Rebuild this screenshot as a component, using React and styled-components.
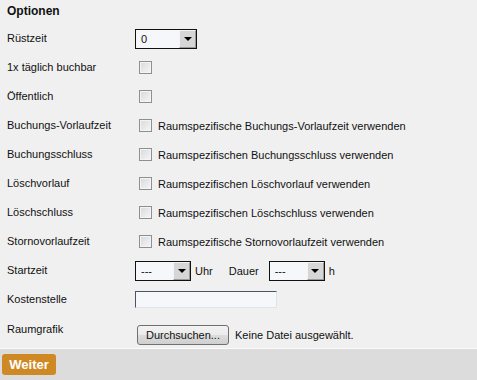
import React from "react";
import styled, { createGlobalStyle } from "styled-components";

const Global = createGlobalStyle`
  html, body { margin: 0; padding: 0; background: #f0f0f0; }
  body { font-family: "Liberation Sans", Arial, sans-serif; font-size: 11px; color: #111; }
`;

const Page = styled.div`
  width: 477px;
  height: 380px;
  display: flex;
  flex-direction: column;
  background: #f0f0f0;
  overflow: hidden;
`;

const Form = styled.div`
  flex: 1;
  padding: 0 0 0 7px;
`;

const Title = styled.div`
  height: 24px;
  padding-top: 4px;
  box-sizing: border-box;
  font-weight: bold;
  font-size: 12px;
  line-height: 14px;
`;

const Row = styled.div`
  display: grid;
  grid-template-columns: 128px 1fr;
  align-items: ${(p) => (p.$top ? "start" : "center")};
  height: ${(p) => p.$h || 29}px;
`;

const Label = styled.div`
  padding-top: ${(p) => p.$pt || 0}px;
  line-height: 13px;
`;

const Control = styled.div`
  display: flex;
  align-items: center;
  padding-top: ${(p) => p.$pt || 0}px;
`;

const Select = styled.div`
  display: flex;
  width: ${(p) => p.$w}px;
  height: 20px;
  box-sizing: border-box;
  border: 1px solid #111;
  background: #f6f7fb;
`;

const SelectValue = styled.div`
  flex: 1;
  padding-left: 5px;
  line-height: 18px;
`;

const SelectArrow = styled.div`
  width: 17px;
  height: 18px;
  box-sizing: border-box;
  border: 1px solid #9a9a9a;
  border-top-color: #f4f4f4;
  border-left-color: #f4f4f4;
  background: #d6d6d6;
  display: flex;
  align-items: center;
  justify-content: center;
  &::after {
    content: "";
    border-left: 4px solid transparent;
    border-right: 4px solid transparent;
    border-top: 4px solid #000;
    margin-top: 1px;
  }
`;

const Check = styled.span`
  display: inline-block;
  width: 13px;
  height: 13px;
  box-sizing: border-box;
  margin-left: 4px;
  border: 1px solid #8e8f8f;
  background: linear-gradient(135deg, #d8d9dd 0%, #f6f6f8 100%);
  box-shadow: inset 0 0 0 1px #f4f4f4;
`;

const CheckText = styled.span`
  margin-left: 6px;
`;

const Unit = styled.span`
  margin-left: ${(p) => p.$ml || 4}px;
  margin-right: ${(p) => p.$mr || 0}px;
`;

const TextInput = styled.div`
  width: 142px;
  height: 17px;
  box-sizing: border-box;
  border: 1px solid #dfe3ec;
  border-top-color: #4f5262;
  border-left-color: #4f5262;
  background: #f6f7fb;
`;

const FileButton = styled.div`
  margin-left: 2px;
  width: 92px;
  height: 20px;
  box-sizing: border-box;
  border: 1px solid #707070;
  border-radius: 3px;
  background: linear-gradient(#f2f2f2, #ebebeb 50%, #dddddd 50%, #cfcfcf);
  display: flex;
  align-items: center;
  justify-content: center;
`;

const FileText = styled.span`
  margin-left: 6px;
`;

const Footer = styled.div`
  height: 29px;
  border-top: 1px solid #fbfbfb;
  background: #dcdcdc;
  padding: 5px 0 0 2px;
  box-sizing: content-box;
`;

const Button = styled.div`
  display: inline-flex;
  align-items: center;
  justify-content: center;
  width: 54px;
  height: 21px;
  border-radius: 3px;
  background: #cf8924;
  color: #fff;
  font-weight: bold;
  font-size: 13px;
`;

const checks = [
  ["Buchungs-Vorlaufzeit", "Raumspezifische Buchungs-Vorlaufzeit verwenden"],
  ["Buchungsschluss", "Raumspezifischen Buchungsschluss verwenden"],
  ["Löschvorlauf", "Raumspezifischen Löschvorlauf verwenden"],
  ["Löschschluss", "Raumspezifischen Löschschluss verwenden"],
  ["Stornovorlaufzeit", "Raumspezifische Stornovorlaufzeit verwenden"],
];

export default function App() {
  return (
    <Page>
      <Global />
      <Form>
        <Title>Optionen</Title>
        <Row>
          <Label>Rüstzeit</Label>
          <Control>
            <Select $w={62}>
              <SelectValue>0</SelectValue>
              <SelectArrow />
            </Select>
          </Control>
        </Row>
        <Row>
          <Label>1x täglich buchbar</Label>
          <Control>
            <Check />
          </Control>
        </Row>
        <Row>
          <Label>Öffentlich</Label>
          <Control>
            <Check />
          </Control>
        </Row>
        {checks.map(([l, t]) => (
          <Row key={l}>
            <Label>{l}</Label>
            <Control>
              <Check />
              <CheckText>{t}</CheckText>
            </Control>
          </Row>
        ))}
        <Row>
          <Label>Startzeit</Label>
          <Control>
            <Select $w={56}>
              <SelectValue>---</SelectValue>
              <SelectArrow />
            </Select>
            <Unit>Uhr</Unit>
            <Unit $ml={16} $mr={10}>Dauer</Unit>
            <Select $w={56}>
              <SelectValue>---</SelectValue>
              <SelectArrow />
            </Select>
            <Unit>h</Unit>
          </Control>
        </Row>
        <Row>
          <Label>Kostenstelle</Label>
          <Control>
            <TextInput />
          </Control>
        </Row>
        <Row $top $h={34}>
          <Label $pt={9}>Raumgrafik</Label>
          <Control $pt={11}>
            <FileButton>Durchsuchen...</FileButton>
            <FileText>Keine Datei ausgewählt.</FileText>
          </Control>
        </Row>
      </Form>
      <Footer>
        <Button>Weiter</Button>
      </Footer>
    </Page>
  );
}
